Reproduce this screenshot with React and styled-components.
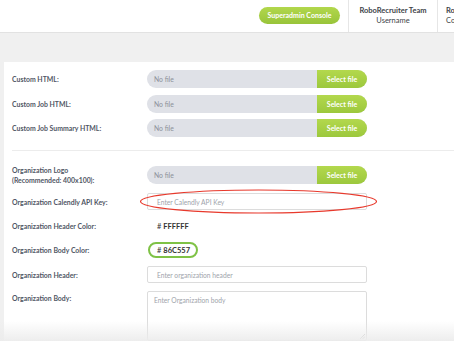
import React from "react";
import styled, { createGlobalStyle } from "styled-components";

const GlobalStyle = createGlobalStyle`
  html, body {
    margin: 0;
    padding: 0;
    background: #f0f0f0;
    font-family: Lato, "Open Sans", sans-serif;
    overflow: hidden;
  }
`;

const Page = styled.div`
  width: 454px;
  height: 341px;
  position: relative;
  overflow: hidden;
  background: #f0f0f0;
`;

const Header = styled.div`
  height: 33px;
  background: #fff;
  border-bottom: 1px solid #e2e2e2;
  display: flex;
  justify-content: flex-end;
  align-items: stretch;
  box-sizing: border-box;
`;

const ConsoleButton = styled.button`
  align-self: center;
  margin: 0 8px 2px 0;
  width: 81px;
  height: 17px;
  border: none;
  border-radius: 9px;
  background: linear-gradient(#b2d74c, #98c43a);
  color: #fff;
  font-family: Lato, sans-serif;
  font-weight: 700;
  font-size: 7px;
  padding: 0;
`;

const UserCell = styled.div`
  width: ${p => p.w}px;
  border-left: 1px solid #e6e6e6;
  display: flex;
  flex-direction: column;
  align-items: ${p => (p.cut ? "flex-start" : "center")};
  padding: 6px 0 0 ${p => (p.cut ? 8 : 0)}px;
  box-sizing: border-box;
  font-size: 7.5px;
  line-height: 10px;
  color: #3c3f48;
  white-space: nowrap;
  overflow: hidden;

  b {
    font-weight: 700;
  }
`;

const Panel = styled.div`
  margin: 29px 0 0 4px;
  background: #fff;
  padding: 8px 0 0 8px;
  height: 290px;
`;

const Section = styled.div`
  display: flex;
  flex-direction: column;
  gap: ${p => p.gap}px;
`;

const Row = styled.div`
  display: grid;
  grid-template-columns: 135px 220px;
  align-items: ${p => (p.top ? "start" : "center")};
  min-height: ${p => p.h}px;
`;

const Label = styled.div`
  font-size: 6.9px;
  line-height: 10px;
  font-weight: 700;
  color: #505664;
  margin-top: ${p => p.mt || 0}px;
`;

const Divider = styled.div`
  height: 1px;
  background: #ececec;
  margin: 13px 0 14px 0;
`;

const FileBox = styled.div`
  display: flex;
  height: 18px;
  border-radius: 9px;
  overflow: hidden;
  background: #dfe1e7;
`;

const FileName = styled.div`
  flex: 1;
  font-size: 6.8px;
  color: #8c909a;
  display: flex;
  align-items: center;
  padding-left: 7px;
`;

const SelectButton = styled.div`
  width: 50px;
  background: linear-gradient(#b3d84d, #9cc83d);
  color: #fff;
  font-weight: 700;
  font-size: 7px;
  display: flex;
  align-items: center;
  justify-content: center;
`;

const TextInput = styled.div`
  height: 17px;
  box-sizing: border-box;
  border: 1px solid #dcdcdc;
  border-radius: 2px;
  font-size: 6.7px;
  color: #a0a4ab;
  display: flex;
  align-items: center;
  padding-left: 9px;
  position: relative;
`;

const TextArea = styled.div`
  height: 50px;
  box-sizing: border-box;
  border: 1px solid #dcdcdc;
  border-radius: 2px;
  font-size: 6.7px;
  color: #a0a4ab;
  padding: 4px 0 0 6px;
  position: relative;
`;

const Grip = styled.svg`
  position: absolute;
  right: 1px;
  bottom: 1px;
`;

const ColorValue = styled.div`
  font-size: 7.5px;
  font-weight: 700;
  color: #333;
  padding-left: 10px;

  span {
    font-weight: 400;
  }
`;

const ColorPill = styled.div`
  justify-self: start;
  height: 16px;
  box-sizing: border-box;
  border: 2px solid #7fc246;
  border-radius: 8px;
  padding: 0 6px 0 7px;
  display: flex;
  align-items: center;
  font-size: 7.5px;
  font-weight: 700;
  color: #333;
  margin-left: 1px;

  span {
    font-weight: 400;
    margin-right: 2px;
  }
`;

const Ellipse = styled.svg`
  position: absolute;
  left: -8px;
  top: -5px;
  overflow: visible;
  pointer-events: none;
`;

const BottomFade = styled.div`
  position: absolute;
  left: 0;
  right: 0;
  bottom: 0;
  height: 20px;
  background: linear-gradient(rgba(240, 240, 240, 0), rgba(236, 236, 236, 0.95));
  pointer-events: none;
`;

const fileRows = ["Custom HTML:", "Custom Job HTML:", "Custom Job Summary HTML:"];

function FileInput() {
  return (
    <FileBox>
      <FileName>No file</FileName>
      <SelectButton>Select file</SelectButton>
    </FileBox>
  );
}

export default function App() {
  return (
    <Page>
      <GlobalStyle />
      <Header>
        <ConsoleButton>Superadmin Console</ConsoleButton>
        <UserCell w={89}>
          <b>RoboRecruiter Team</b>
          <span>Username</span>
        </UserCell>
        <UserCell w={17} cut>
          <b>RoboRecruiter</b>
          <span>Company</span>
        </UserCell>
      </Header>

      <Panel>
        <Section gap={6.5}>
          {fileRows.map(label => (
            <Row key={label} h={18}>
              <Label>{label}</Label>
              <FileInput />
            </Row>
          ))}
        </Section>

        <Divider />

        <Section gap={8}>
          <Row h={20}>
            <Label>
              Organization Logo
              <br />
              (Recommended: 400x100):
            </Label>
            <FileInput />
          </Row>
          <Row h={17}>
            <Label>Organization Calendly API Key:</Label>
            <TextInput>
              Enter Calendly API Key
              <Ellipse width="237" height="24">
                <ellipse cx="118.5" cy="12.5" rx="118" ry="11.5" fill="none" stroke="#e8392c" strokeWidth="1.2" />
              </Ellipse>
            </TextInput>
          </Row>
          <Row h={16}>
            <Label>Organization Header Color:</Label>
            <ColorValue>
              <span># </span>FFFFFF
            </ColorValue>
          </Row>
          <Row h={16}>
            <Label>Organization Body Color:</Label>
            <ColorPill>
              <span>#</span>86C557
            </ColorPill>
          </Row>
          <Row h={17}>
            <Label>Organization Header:</Label>
            <TextInput>Enter organization header</TextInput>
          </Row>
          <Row h={50} top>
            <Label mt={2}>Organization Body:</Label>
            <TextArea>
              Enter Organization body
              <Grip width="6" height="6" viewBox="0 0 6 6">
                <path d="M1 6 L6 1 M3.5 6 L6 3.5" stroke="#999" strokeWidth="0.6" />
              </Grip>
            </TextArea>
          </Row>
        </Section>
      </Panel>
      <BottomFade />
    </Page>
  );
}
